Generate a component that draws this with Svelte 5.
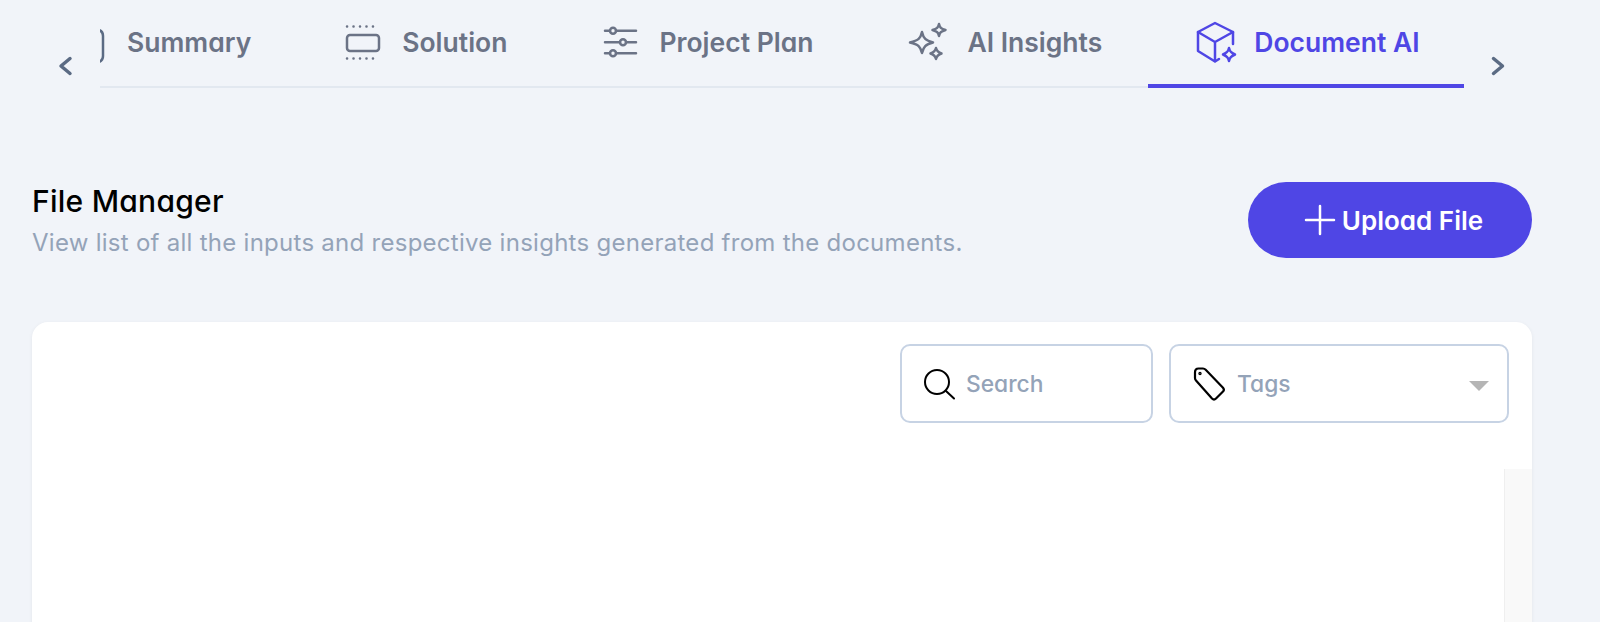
<script>
  const tabs = ["Summary", "Solution", "Project Plan", "AI Insights", "Document AI"];
  let activeTab = $state("Document AI");
</script>

<div class="page">
  <div class="tabs-row">
    <button class="arrow" aria-label="Previous">
      <svg width="16" height="20" viewBox="0 0 16 20" fill="none" stroke="currentColor" stroke-width="3.500" stroke-linecap="round" stroke-linejoin="round"><path d="M13 2.500 4 10l9 7.500"/></svg>
    </button>

    <div class="tabs">
      {#each tabs as tab}
        <button class="tab {activeTab === tab ? 'active' : ''}" onclick={() => (activeTab = tab)}>
          <svg class="tab-icon" width="40" height="40" viewBox="0 0 40 40" fill="none" stroke="currentColor" stroke-width="2.500" stroke-linecap="round" stroke-linejoin="round">
            {#if tab === "Summary"}
              <path d="M31 8c3 1 4 3 4 6v20c0 3-1 5-4 6" stroke="#5b6b84"/>
            {:else if tab === "Solution"}
              <rect x="4" y="13" width="32" height="16" rx="3"/>
              <path d="M4 4.500h32M4 36.500h32" stroke-dasharray="0.100 6.380"/>
            {:else if tab === "Project Plan"}
              <path d="M5 8.700h5M16 8.700h20M5 20.300h15M26 20.300h10M5 31.300h5M16 31.300h20"/>
              <circle cx="13" cy="8.700" r="3"/>
              <circle cx="23" cy="20.300" r="3"/>
              <circle cx="13" cy="31.300" r="3"/>
            {:else if tab === "AI Insights"}
              <path d="M14 10c1.500 6.500 3.500 8.500 11 10.500-7.500 2-9.500 4-11 10.500-1.500-6.500-3.500-8.500-12-10.500 8.500-2 10.500-4 12-10.500Z"/>
              <path d="M31 2c.8 3.500 2 4.700 6.500 6-4.500 1.300-5.700 2.500-6.500 6-.8-3.500-2-4.700-6.500-6 4.500-1.300 5.700-2.500 6.500-6Z"/>
              <path d="M28 26c.7 3 1.800 4.200 5.500 5.500-3.700 1.300-4.800 2.500-5.500 5.500-.7-3-1.800-4.200-5.500-5.500 3.700-1.300 4.800-2.500 5.500-5.500Z"/>
            {:else}
              <path d="M38 22V10L20 1 3 10v19l17 10.500 4-2.500"/>
              <path d="M3 10l17 10 18-10M20 20v19"/>
              <path d="M34 26c.8 3.600 2 4.800 6 6.500-4 1.700-5.200 2.900-6 6.500-.8-3.600-2-4.800-6-6.500 4-1.700 5.200-2.900 6-6.500Z"/>
            {/if}
          </svg>
          <span>{tab}</span>
        </button>
      {/each}
    </div>

    <button class="arrow" aria-label="Next">
      <svg width="16" height="20" viewBox="0 0 16 20" fill="none" stroke="currentColor" stroke-width="3.500" stroke-linecap="round" stroke-linejoin="round"><path d="M3.500 2.500l9 7.500-9 7.500"/></svg>
    </button>
  </div>

  <div class="header">
    <div class="heading">
      <h1>File Manager</h1>
      <p>View list of all the inputs and respective insights generated from the documents.</p>
    </div>
    <button class="upload-btn">
      <svg width="32" height="32" viewBox="0 0 32 32" fill="none" stroke="currentColor" stroke-width="2.500" stroke-linecap="round"><path d="M16 2v28M2 16h28"/></svg>
      Upload File
    </button>
  </div>

  <div class="card">
    <div class="filters">
      <label class="field search">
        <svg width="32" height="32" viewBox="0 0 32 32" fill="none" stroke="#000" stroke-width="2" stroke-linecap="round"><circle cx="14" cy="14" r="12"/><path d="M23 23l8 7.500"/></svg>
        <span>Search</span>
      </label>
      <div class="field tags">
        <svg width="32" height="34" viewBox="0 0 32 34" fill="none" stroke="#000" stroke-width="2.200" stroke-linejoin="round"><path d="M2 5.500C2 3 3 1.500 5.500 1.500H10c1 0 2 .5 2.700 1.200l17.300 18c1 1.200 1 2.800 0 3.800l-7 7c-1.200 1.200-2.800 1.200-4 0L3 13.500C2.300 12.800 2 12 2 11Z"/><circle cx="7" cy="6.500" r="0.600" fill="#000"/></svg>
        <span>Tags</span>
        <i class="caret"></i>
      </div>
    </div>
    <div class="list">
      <div class="scrollbar"></div>
    </div>
  </div>
</div>

<style>
  :global(body) {
    margin: 0;
    background: #f1f4f9;
  }

  .page {
    height: 622px;
    overflow: hidden;
    font-family: Inter, "Liberation Sans", sans-serif;
    font-feature-settings: "cv11";
  }

  button {
    font-family: inherit;
    font-feature-settings: inherit;
    border: none;
    background: transparent;
    padding: 0;
    cursor: pointer;
  }

  .tabs-row {
    display: flex;
    align-items: flex-end;
    height: 88px;
  }

  .arrow {
    width: 100px;
    height: 20px;
    margin-bottom: 12px;
    display: flex;
    justify-content: flex-start;
    padding-left: 57px;
    color: #5b6b84;
  }

  .arrow:last-child {
    width: 136px;
    padding-left: 26px;
  }

  .tabs {
    display: flex;
    width: 1364px;
    height: 88px;
    overflow: hidden;
    box-shadow: inset 0 -2px 0 #e2e8f0;
  }

  .tab {
    flex: none;
    display: flex;
    align-items: center;
    gap: 19px;
    height: 88px;
    box-sizing: border-box;
    padding: 0 45px 4px 48px;
    color: #6b7386;
    font-size: 26.500px;
    font-weight: 600;
    white-space: nowrap;
  }

  .tab:first-child {
    margin-left: -80px;
    padding-right: 44px;
  }

  .tab:nth-child(3) {
    padding-right: 47px;
  }

  .tab:nth-child(4) {
    padding-right: 46px;
  }

  .tab.active {
    color: #4f46e5;
    box-shadow: inset 0 -4px 0 #4f46e5;
    padding-left: 47px;
    padding-right: 52px;
  }

  .tab-icon {
    flex: none;
    overflow: visible;
  }

  .header {
    display: flex;
    justify-content: space-between;
    align-items: flex-start;
    padding: 94px 68px 0 32px;
  }

  h1 {
    margin: 1px 0 0;
    font-size: 30px;
    font-weight: 500;
    line-height: 36px;
    letter-spacing: 0.25px;
    color: #000;
  }

  p {
    margin: 8px 0 0;
    font-size: 24px;
    line-height: 32px;
    letter-spacing: 0.27px;
    color: #94a3b8;
    font-feature-settings: normal;
  }

  .upload-btn {
    width: 284px;
    height: 76px;
    border-radius: 38px;
    background: #4f46e5;
    color: #fff;
    font-size: 26px;
    font-weight: 600;
    display: flex;
    align-items: center;
    justify-content: center;
    gap: 6px;
    padding-left: 7px;
  }

  .card {
    margin: 63px 68px 0 32px;
    height: 400px;
    background: #fff;
    border-radius: 16px;
    box-shadow: 0 1px 4px rgba(15, 23, 42, 0.06);
    display: flex;
    flex-direction: column;
  }

  .filters {
    display: flex;
    justify-content: flex-end;
    gap: 16px;
    padding: 22px 23px 0 0;
  }

  .field {
    height: 79px;
    box-sizing: border-box;
    border: 2px solid #c7d3e4;
    border-radius: 10px;
    display: flex;
    align-items: center;
    gap: 11px;
    padding-left: 21px;
    font-size: 22.800px;
    font-weight: 500;
    color: #94a3b8;
  }

  .search {
    width: 253px;
  }

  .tags {
    width: 340px;
    position: relative;
    gap: 12px;
    padding-left: 22px;
  }

  .caret {
    position: absolute;
    right: 18px;
    top: 35px;
    border-left: 10px solid transparent;
    border-right: 10px solid transparent;
    border-top: 10px solid #b5b5b5;
  }

  .list {
    flex: 1;
    display: flex;
    justify-content: flex-end;
    margin-top: 46px;
  }

  .scrollbar {
    width: 28px;
    background: #f9f9f9;
    border-left: 1px solid #efefef;
    box-sizing: border-box;
  }
</style>
